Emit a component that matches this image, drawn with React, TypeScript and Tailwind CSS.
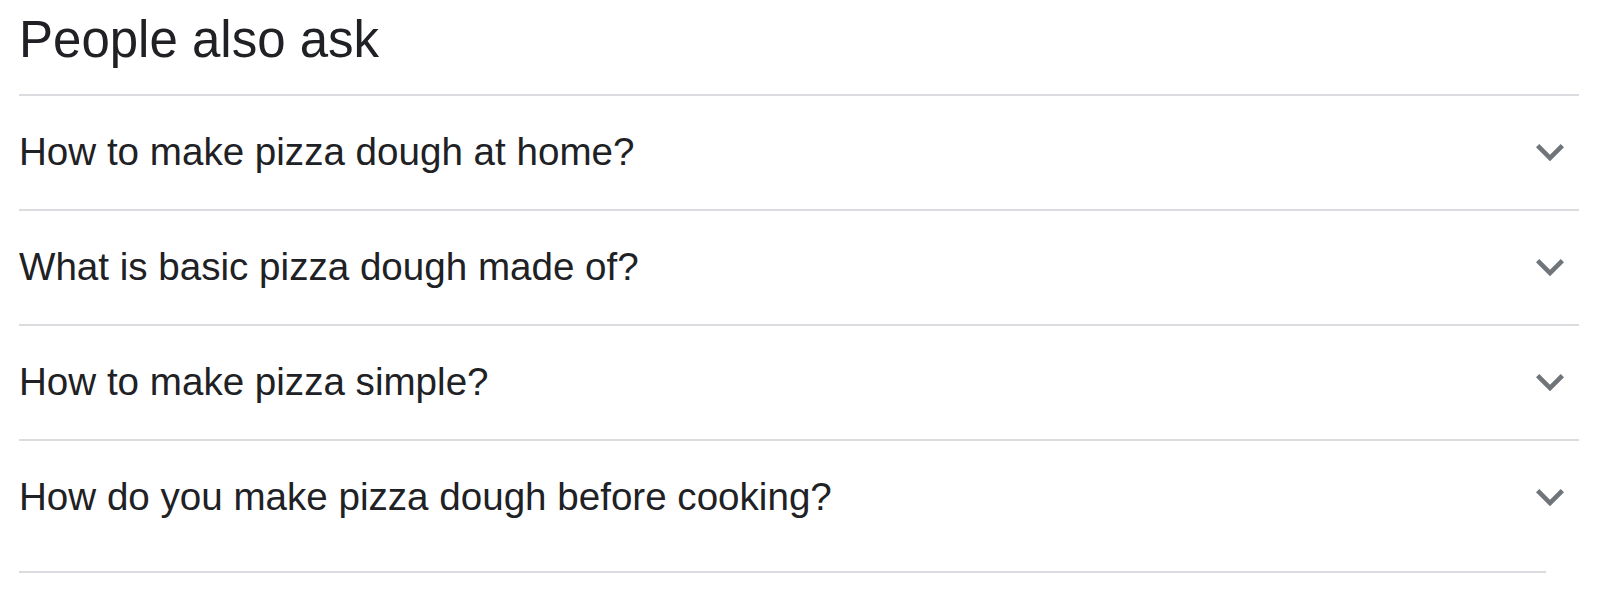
const questions = [
  "How to make pizza dough at home?",
  "What is basic pizza dough made of?",
  "How to make pizza simple?",
  "How do you make pizza dough before cooking?",
];

function ChevronDown() {
  return (
    <svg
      width="56"
      height="56"
      viewBox="0 0 24 24"
      className="shrink-0 fill-[#70757a]"
    >
      <path d="M16.59 8.59L12 13.17 7.41 8.59 6 10l6 6 6-6z" />
    </svg>
  );
}

function QuestionRow({ text, last }: { text: string; last: boolean }) {
  return (
    <div
      className={`border-t-2 border-[#dadce0] pt-[37px] ${
        last ? "pb-[55px]" : "pb-[38px]"
      }`}
    >
      <div className="flex items-center justify-between h-[38px] mr-[1px]">
        <span className="text-[38.6px] leading-[38px] text-[#202124] whitespace-nowrap">
          {text}
        </span>
        <ChevronDown />
      </div>
    </div>
  );
}

export default function App() {
  return (
    <div
      className="w-[1600px] h-[595px] bg-white pl-[19px]"
      style={{ fontFamily: '"Liberation Sans", Arial, sans-serif' }}
    >
      <div className="w-[1560px]">
        <h2 className="pt-[15px] pb-[29px] text-[51px] leading-[50px] font-normal text-[#202124]">
          People also ask
        </h2>
        {questions.map((q, i) => (
          <QuestionRow key={q} text={q} last={i === questions.length - 1} />
        ))}
      </div>
      <div className="w-[1527px] border-t-2 border-[#dadce0]" />
    </div>
  );
}
